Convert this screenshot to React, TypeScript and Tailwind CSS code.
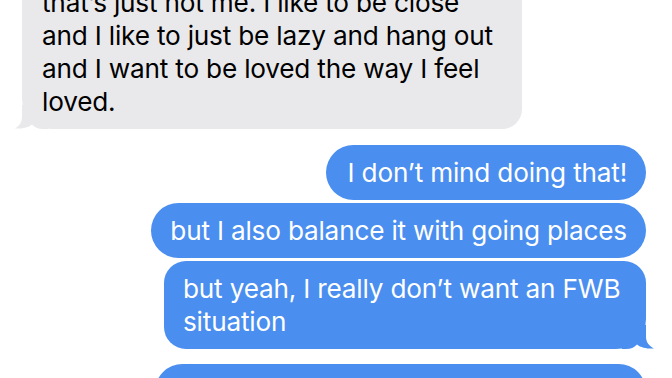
import * as React from 'react';

const GrayTail: React.FC = () => (
  <svg className="absolute bottom-0 left-[-8px]" width="34" height="24" viewBox="0 0 34 24">
    <path d="M8 0 L8 12 C8 17 5.5 21 1 23.5 C6 24 14 23 18 19.5 C21 22.5 24 24 29 24 L34 24 L34 0 Z" fill="#e9e9eb" />
  </svg>
);

const BlueTail: React.FC = () => (
  <svg className="absolute bottom-0 right-[-10px]" width="34" height="24" viewBox="0 0 34 24">
    <path d="M24 0 L24 12 C24 17 27 21 32 23.5 C27 24 19 23 15 19.5 C12 22.5 9 24 4 24 L0 24 L0 0 Z" fill="#4a8ef0" />
  </svg>
);

const Sent: React.FC<{ children?: React.ReactNode; className?: string; tail?: boolean }> = ({ children, className, tail }) => (
  <div className="flex justify-end pr-[26px]">
    <div className={`relative bg-[#4a8ef0] text-white py-[11px] ${className ?? ''}`}>
      {tail && <BlueTail />}
      <div className="relative">{children}</div>
    </div>
  </div>
);

const App: React.FC = () => {
  return (
    <div className="h-[378px] w-[672px] overflow-hidden bg-white font-['Inter','Open_Sans',sans-serif] text-[26.2px] leading-[33px] tracking-[-0.2px]">
      <div className="-mt-[25px] flex flex-col">
        <div className="pl-[22px]">
          <div className="relative w-[500px] rounded-[20px] rounded-bl-[30px] bg-[#e9e9eb] px-[20px] pt-[11px] pb-[11px] text-black">
            <GrayTail />
            <div className="relative">
              <div className="whitespace-nowrap">that’s just not me. I like to be close</div>
              <div className="whitespace-nowrap">and I like to just be lazy and hang out</div>
              <div className="whitespace-nowrap">and I want to be loved the way I feel</div>
              <div className="whitespace-nowrap">loved.</div>
            </div>
          </div>
        </div>

        <div className="mt-[16px] flex flex-col gap-[3px]">
          <Sent className="rounded-[28px] pl-[22px] pr-[19px] whitespace-nowrap">I don’t mind doing that!</Sent>
          <Sent className="rounded-[28px] px-[19px] whitespace-nowrap">but I also balance it with going places</Sent>
          <Sent className="w-[482px] rounded-[22px] rounded-br-[30px] px-[19px]" tail>
            <div className="whitespace-nowrap">but yeah, I really don’t want an FWB</div>
            <div>situation</div>
          </Sent>
        </div>

        <div className="mt-[15px] flex justify-end pr-[26px]">
          <div className="h-[55px] w-[491px] rounded-[28px] bg-[#4a8ef0]" />
        </div>
      </div>
    </div>
  );
};

export default App;
